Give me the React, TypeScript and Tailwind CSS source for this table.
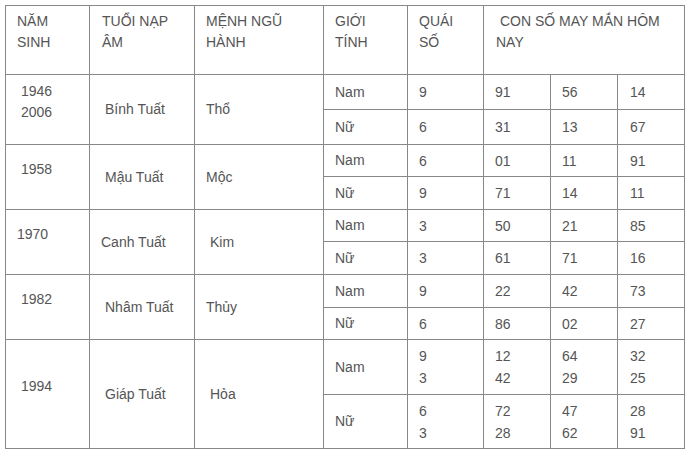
type Sub = { gender: string; quai: string[]; nums: string[][] };
type Group = {
  years: string[];
  yearPad: string;
  canchi: string;
  canPad: string;
  menh: string;
  menhPad: string;
  heights: [string, string];
  subs: Sub[];
};

const groups: Group[] = [
  {
    years: ["1946", "2006"],
    yearPad: "pl-[15px]",
    canchi: "Bính Tuất",
    canPad: "pl-[15px]",
    menh: "Thổ",
    menhPad: "pl-[11px]",
    heights: ["h-[35px]", "h-[35px]"],
    subs: [
      { gender: "Nam", quai: ["9"], nums: [["91"], ["56"], ["14"]] },
      { gender: "Nữ", quai: ["6"], nums: [["31"], ["13"], ["67"]] },
    ],
  },
  {
    years: ["1958"],
    yearPad: "pl-[15px]",
    canchi: "Mậu Tuất",
    canPad: "pl-[15px]",
    menh: "Mộc",
    menhPad: "pl-[11px]",
    heights: ["h-[32px]", "h-[33px]"],
    subs: [
      { gender: "Nam", quai: ["6"], nums: [["01"], ["11"], ["91"]] },
      { gender: "Nữ", quai: ["9"], nums: [["71"], ["14"], ["11"]] },
    ],
  },
  {
    years: ["1970"],
    yearPad: "pl-[11px]",
    canchi: "Canh Tuất",
    canPad: "pl-[11px]",
    menh: "Kim",
    menhPad: "pl-[15px]",
    heights: ["h-[32px]", "h-[33px]"],
    subs: [
      { gender: "Nam", quai: ["3"], nums: [["50"], ["21"], ["85"]] },
      { gender: "Nữ", quai: ["3"], nums: [["61"], ["71"], ["16"]] },
    ],
  },
  {
    years: ["1982"],
    yearPad: "pl-[15px]",
    canchi: "Nhâm Tuất",
    canPad: "pl-[15px]",
    menh: "Thủy",
    menhPad: "pl-[11px]",
    heights: ["h-[33px]", "h-[32px]"],
    subs: [
      { gender: "Nam", quai: ["9"], nums: [["22"], ["42"], ["73"]] },
      { gender: "Nữ", quai: ["6"], nums: [["86"], ["02"], ["27"]] },
    ],
  },
  {
    years: ["1994"],
    yearPad: "pl-[15px]",
    canchi: "Giáp Tuất",
    canPad: "pl-[15px]",
    menh: "Hỏa",
    menhPad: "pl-[15px]",
    heights: ["h-[55px]", "h-[54px]"],
    subs: [
      { gender: "Nam", quai: ["9", "3"], nums: [["12", "42"], ["64", "29"], ["32", "25"]] },
      { gender: "Nữ", quai: ["6", "3"], nums: [["72", "28"], ["47", "62"], ["28", "91"]] },
    ],
  },
];

const cell = "border border-[#888] align-middle pr-[6px]";

function Lines({ items }: { items: string[] }) {
  return (
    <>
      {items.map((t, i) => (
        <div key={i}>{t}</div>
      ))}
    </>
  );
}

export default function App() {
  return (
    <div className="w-[689px] h-[457px] bg-white pt-[5px] pl-[5px] font-['Liberation_Sans',Arial,sans-serif] text-[14px] leading-[21px] text-[#555]">
      <table className="table-fixed border-collapse w-[680px]">
        <colgroup>
          <col className="w-[84px]" />
          <col className="w-[105px]" />
          <col className="w-[129px]" />
          <col className="w-[84px]" />
          <col className="w-[76px]" />
          <col className="w-[67px]" />
          <col className="w-[67px]" />
          <col className="w-[67px]" />
        </colgroup>
        <thead>
          <tr className="h-[69px]">
            <th className="border border-[#888] align-top text-left font-normal pl-[11px] pt-[5px]">
              NĂM<br />SINH
            </th>
            <th className="border border-[#888] align-top text-left font-normal pl-[12px] pt-[5px]">
              TUỔI NẠP<br />ÂM
            </th>
            <th className="border border-[#888] align-top text-left font-normal pl-[11px] pt-[5px]">
              MỆNH NGŨ<br />HÀNH
            </th>
            <th className="border border-[#888] align-top text-left font-normal pl-[11px] pt-[5px]">
              GIỚI<br />TÍNH
            </th>
            <th className="border border-[#888] align-top text-left font-normal pl-[11px] pt-[5px]">
              QUÁI<br />SỐ
            </th>
            <th
              colSpan={3}
              className="border border-[#888] align-top text-left font-normal pl-[12px] pt-[5px]"
            >
              <span className="pl-[4px]">CON SỐ MAY MẮN HÔM</span>
              <br />
              NAY
            </th>
          </tr>
        </thead>
        <tbody>
          {groups.map((g) =>
            g.subs.map((s, si) => (
              <tr key={g.canchi + si} className={g.heights[si]}>
                {si === 0 && (
                  <>
                    <td rowSpan={2} className={`${cell} ${g.yearPad} pb-[15px]`}>
                      <Lines items={g.years} />
                    </td>
                    <td rowSpan={2} className={`${cell} ${g.canPad}`}>
                      {g.canchi}
                    </td>
                    <td rowSpan={2} className={`${cell} ${g.menhPad}`}>
                      {g.menh}
                    </td>
                  </>
                )}
                <td className={`${cell} pl-[11px]`}>{s.gender}</td>
                <td className={`${cell} pl-[11px] leading-[22px]`}>
                  <Lines items={s.quai} />
                </td>
                {s.nums.map((n, ni) => (
                  <td key={ni} className={`${cell} ${ni === 2 ? "pl-[12px]" : "pl-[11px]"} leading-[22px]`}>
                    <Lines items={n} />
                  </td>
                ))}
              </tr>
            ))
          )}
        </tbody>
      </table>
    </div>
  );
}
